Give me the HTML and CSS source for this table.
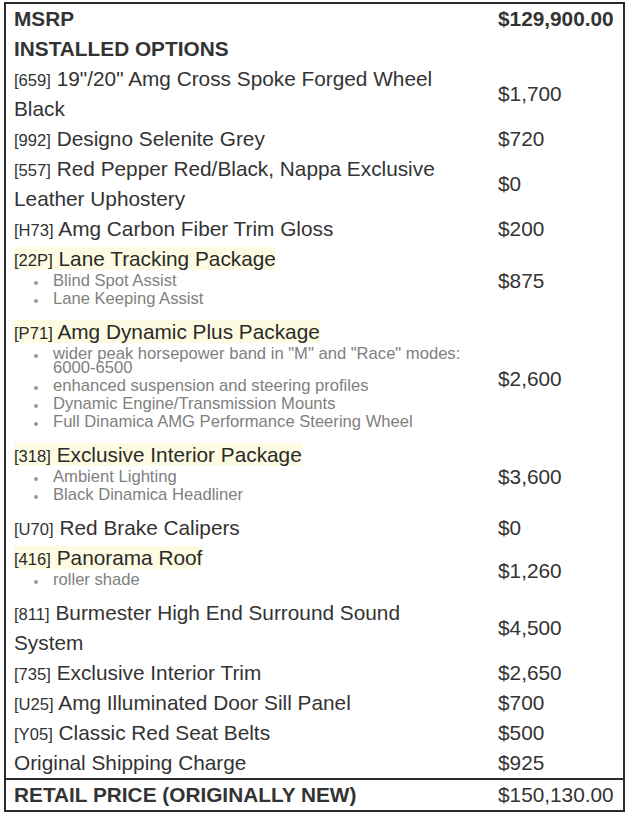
FILE: index.html
```html
<!DOCTYPE html>
<html lang="en">
<head>
<meta charset="utf-8">
<title>Window Sticker</title>
<link rel="stylesheet" href="styles.css">
</head>
<body>
<div class="sheet">
  <div class="row">
    <div class="desc strong">MSRP</div>
    <div class="price strong">$129,900.00</div>
  </div>
  <div class="row">
    <div class="desc strong">INSTALLED OPTIONS</div>
    <div class="price"></div>
  </div>
  <div class="row">
    <div class="desc"><span class="code">[659]</span> 19"/20" Amg Cross Spoke Forged Wheel Black</div>
    <div class="price">$1,700</div>
  </div>
  <div class="row">
    <div class="desc"><span class="code">[992]</span> Designo Selenite Grey</div>
    <div class="price">$720</div>
  </div>
  <div class="row">
    <div class="desc"><span class="code">[557]</span> Red Pepper Red/Black, Nappa Exclusive Leather Uphostery</div>
    <div class="price">$0</div>
  </div>
  <div class="row">
    <div class="desc"><span class="code">[H73]</span> Amg Carbon Fiber Trim Gloss</div>
    <div class="price">$200</div>
  </div>
  <div class="row pkg">
    <div class="desc">
      <span class="title"><span class="code">[22P]</span> Lane Tracking Package</span>
      <ul class="features">
        <li>Blind Spot Assist</li>
        <li>Lane Keeping Assist</li>
      </ul>
    </div>
    <div class="price">$875</div>
  </div>
  <div class="row pkg">
    <div class="desc">
      <span class="title"><span class="code">[P71]</span> Amg Dynamic Plus Package</span>
      <ul class="features">
        <li>wider peak horsepower band in "M" and "Race" modes: 6000-6500</li>
        <li>enhanced suspension and steering profiles</li>
        <li>Dynamic Engine/Transmission Mounts</li>
        <li>Full Dinamica AMG Performance Steering Wheel</li>
      </ul>
    </div>
    <div class="price">$2,600</div>
  </div>
  <div class="row pkg">
    <div class="desc">
      <span class="title"><span class="code">[318]</span> Exclusive Interior Package</span>
      <ul class="features">
        <li>Ambient Lighting</li>
        <li>Black Dinamica Headliner</li>
      </ul>
    </div>
    <div class="price">$3,600</div>
  </div>
  <div class="row">
    <div class="desc"><span class="code">[U70]</span> Red Brake Calipers</div>
    <div class="price">$0</div>
  </div>
  <div class="row pkg">
    <div class="desc">
      <span class="title"><span class="code">[416]</span> Panorama Roof</span>
      <ul class="features">
        <li>roller shade</li>
      </ul>
    </div>
    <div class="price">$1,260</div>
  </div>
  <div class="row">
    <div class="desc"><span class="code">[811]</span> Burmester High End Surround Sound System</div>
    <div class="price">$4,500</div>
  </div>
  <div class="row">
    <div class="desc"><span class="code">[735]</span> Exclusive Interior Trim</div>
    <div class="price">$2,650</div>
  </div>
  <div class="row">
    <div class="desc"><span class="code">[U25]</span> Amg Illuminated Door Sill Panel</div>
    <div class="price">$700</div>
  </div>
  <div class="row">
    <div class="desc"><span class="code">[Y05]</span> Classic Red Seat Belts</div>
    <div class="price">$500</div>
  </div>
  <div class="row">
    <div class="desc">Original Shipping Charge</div>
    <div class="price">$925</div>
  </div>
  <div class="row total">
    <div class="desc strong">RETAIL PRICE (ORIGINALLY NEW)</div>
    <div class="price">$150,130.00</div>
  </div>
</div>
</body>
</html>
```

FILE: styles.css
```css
html, body {
  margin: 0;
  padding: 0;
  background: #ffffff;
}

body {
  font-family: "Liberation Sans", Arial, sans-serif;
  color: #333333;
}

.sheet {
  box-sizing: border-box;
  width: 621px;
  margin: 2px 0 0 4px;
  border: 2px solid #2b2b2b;
  display: flex;
  flex-direction: column;
}

.row {
  display: grid;
  grid-template-columns: 1fr 125px;
  font-size: 20.8px;
  line-height: 30px;
}

.desc {
  padding: 0 28px 0 8px;
}

.price {
  display: flex;
  align-items: center;
}

.strong {
  font-weight: bold;
}

.code {
  font-size: 16.6px;
  line-height: 1;
}

.pkg .desc {
  padding-bottom: 7px;
}

.title {
  background: #fdfbe2;
  color: #2a2a2a;
}

.features {
  margin: 0;
  padding: 0 0 0 34px;
  list-style: disc;
  font-size: 16.6px;
  line-height: 14px;
  color: #808080;
}

.features li {
  margin-bottom: 4px;
  padding-left: 5px;
}

.features li::marker {
  color: #9a9a9a;
  font-size: 12px;
}

.total {
  border-top: 2px solid #2b2b2b;
}
```
